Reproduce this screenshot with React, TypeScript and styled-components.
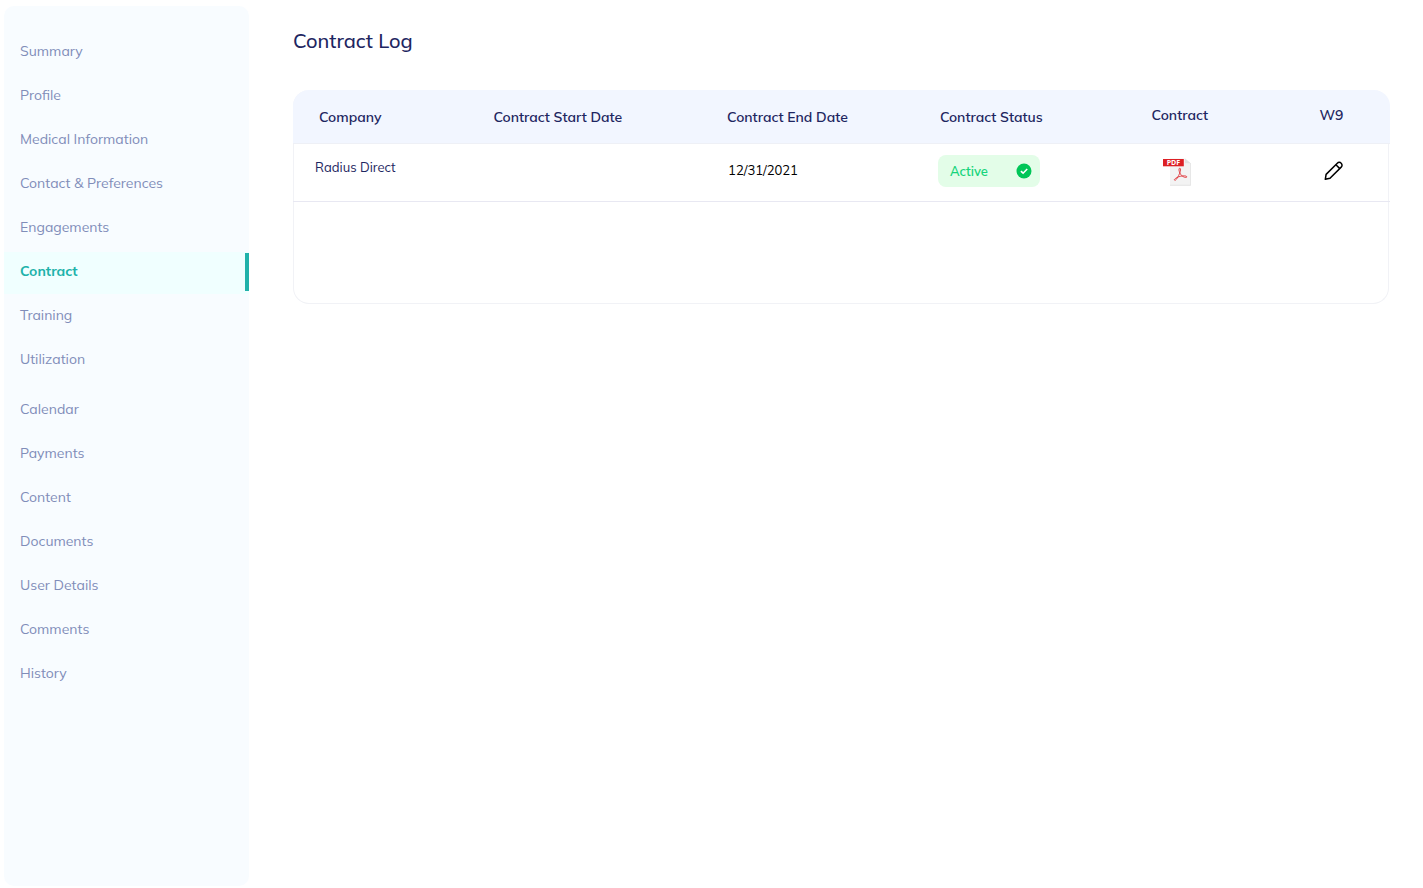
import React from "react";
import styled, { createGlobalStyle } from "styled-components";

const GlobalStyle = createGlobalStyle`
  *, *::before, *::after { box-sizing: border-box; }
  body {
    margin: 0;
    background: #fff;
    color: #1e2661;
    font-family: Mulish, Lato, "Liberation Sans", sans-serif;
  }
`;

const Page = styled.div`
  display: flex;
  gap: 44px;
  min-height: 100vh;
  padding: 6px 34px 2px 4px;
`;

const Sidebar = styled.nav`
  flex: none;
  width: 245px;
  padding: 26px 0;
  border-radius: 10px;
  background: #f8fcff;
`;

const NavGroup = styled.ul`
  display: flex;
  flex-direction: column;
  gap: 2px;
  margin: 0;
  padding: 0;
  list-style: none;

  & + & {
    margin-top: 8px;
  }
`;

const NavLink = styled.a<{ $active: boolean }>`
  display: flex;
  align-items: flex-start;
  justify-content: space-between;
  height: 42px;
  padding-left: 16px;
  background: ${(p) => (p.$active ? "#f0ffff" : "transparent")};
  color: ${(p) => (p.$active ? "#20b2aa" : "#808db9")};
  font-size: 14px;
  font-weight: ${(p) => (p.$active ? 700 : 400)};
  line-height: 38px;
  text-decoration: none;

  &::after {
    content: "";
    width: 4px;
    height: 38px;
    margin-top: 1px;
    background: ${(p) => (p.$active ? "#20b2aa" : "transparent")};
  }
`;

const Main = styled.main`
  flex: 1;
  min-width: 0;
  padding-top: 20px;
`;

const Title = styled.h1`
  margin: 0 0 34px;
  font-size: 20px;
  font-weight: 500;
  line-height: 30px;
`;

const TableCard = styled.section`
  min-height: 214px;
  border: 1px solid #f1f2f6;
  border-top: 0;
  border-radius: 16px;
`;

const Table = styled.table`
  width: calc(100% + 3px);
  margin-left: -1px;
  table-layout: fixed;
  border-collapse: separate;
  border-spacing: 0;
`;

const HeadCell = styled.th<{ $width: string; $raised?: boolean }>`
  width: ${(p) => p.$width};
  height: 54px;
  padding: 0 0 ${(p) => (p.$raised ? 4 : 0)}px 26px;
  border-bottom: 1px solid #eef0f6;
  background: #f2f6ff;
  font-size: 14px;
  font-weight: 600;
  line-height: 20px;
  text-align: left;
  white-space: nowrap;

  &:first-child {
    border-top-left-radius: 16px;
  }

  &:last-child {
    border-top-right-radius: 16px;
  }
`;

const Cell = styled.td<{ $inset?: number; $lift?: number; $dark?: boolean }>`
  height: 58px;
  padding: 0 0 ${(p) => p.$lift ?? 4}px ${(p) => p.$inset ?? 27}px;
  border-bottom: 1px solid #e8e8f2;
  color: ${(p) => (p.$dark ? "#000" : "#1e2661")};
  font-size: 13px;
  line-height: 20px;
  white-space: nowrap;
`;

const Status = styled.span`
  display: flex;
  align-items: center;
  justify-content: space-between;
  width: 102px;
  height: 32px;
  padding: 0 8px 0 12px;
  border-radius: 8px;
  background: #e3fde8;
  color: #16d47b;
  font-size: 13px;
  font-weight: 600;
`;

const FileLink = styled.a`
  display: block;
  width: 28px;
  height: 28px;
`;

const IconButton = styled.button`
  display: block;
  width: 20px;
  height: 20px;
  padding: 0;
  border: 0;
  background: none;
  color: #000;
  cursor: pointer;
`;

const CheckBadge = () => (
  <svg width="16" height="16" viewBox="0 0 16 16" aria-hidden="true">
    <circle cx="8" cy="8" r="7.5" fill="#00c657" />
    <path d="M4.9 8.1 7.1 10.2 11.2 6" fill="none" stroke="#fff" strokeWidth="1.6" />
  </svg>
);

const PdfIcon = () => (
  <svg width="28" height="28" viewBox="0 0 28 28" aria-hidden="true">
    <path d="M7 .5h15l5.7 4.8v22H7z" fill="#f3f3f3" />
    <path d="M7 27.3h20.7V5" fill="none" stroke="#dedede" strokeWidth="0.8" />
    <path d="M22 .5v4.8h5.7z" fill="#e2e2e2" />
    <path d="M0 1h20.8v7.3H0z" fill="#dd2025" />
    <text
      x="10.4"
      y="7.2"
      textAnchor="middle"
      fill="#fff"
      fontFamily="Open Sans, Liberation Sans, sans-serif"
      fontSize="7"
      fontWeight="700"
    >
      PDF
    </text>
    <path
      d="M16.600 10.200c-1.200.3-.5 3.100.2 4.600 1 2.200 2.300 3.300 3.900 4.100 1.500.8 3.200.8 3.100-.1-.1-1.200-3.600-1.100-6-.6-2.500.5-5.600 1.900-6.300 3.200-.5.900.7 1.400 1.800 0 1.500-1.900 3.400-5.700 4-8.100.4-1.700.3-3.200-.7-3.100z"
      fill="none"
      stroke="#dd2025"
      strokeWidth="0.8"
    />
  </svg>
);

const PencilIcon = () => (
  <svg
    width="20"
    height="20"
    viewBox="0 0 20 20"
    fill="none"
    stroke="currentColor"
    strokeWidth="1.5"
    strokeLinejoin="round"
    aria-hidden="true"
  >
    <path d="M1.3 18.3 2.1 13.4 13.3 2.2a2.7 2.7 0 0 1 3.9 0 2.7 2.7 0 0 1 0 3.9L6 17.3z" />
    <path d="m11.9 3.7 3.9 3.9" />
  </svg>
);

const navGroups = [
  [
    "Summary",
    "Profile",
    "Medical Information",
    "Contact & Preferences",
    "Engagements",
    "Contract",
    "Training",
    "Utilization",
  ],
  ["Calendar", "Payments", "Content", "Documents", "User Details", "Comments", "History"],
];

const columns = [
  { label: "Company", width: "15.9%" },
  { label: "Contract Start Date", width: "21.3%" },
  { label: "Contract End Date", width: "19.4%" },
  { label: "Contract Status", width: "19.3%" },
  { label: "Contract", width: "15.3%", raised: true },
  { label: "W9", width: "8.8%", raised: true },
];

export default function App() {
  return (
    <>
      <GlobalStyle />
      <Page>
        <Sidebar aria-label="Sections">
          {navGroups.map((group) => (
            <NavGroup key={group[0]}>
              {group.map((item) => (
                <li key={item}>
                  <NavLink
                    href="#"
                    $active={item === "Contract"}
                    aria-current={item === "Contract" ? "page" : undefined}
                  >
                    {item}
                  </NavLink>
                </li>
              ))}
            </NavGroup>
          ))}
        </Sidebar>
        <Main>
          <Title>Contract Log</Title>
          <TableCard>
            <Table>
              <thead>
                <tr>
                  {columns.map((c) => (
                    <HeadCell key={c.label} scope="col" $width={c.width} $raised={c.raised}>
                      {c.label}
                    </HeadCell>
                  ))}
                </tr>
              </thead>
              <tbody>
                <tr>
                  <Cell $inset={22} $lift={12}>Radius Direct</Cell>
                  <Cell />
                  <Cell $lift={6} $dark>12/31/2021</Cell>
                  <Cell $inset={24}>
                    <Status>
                      Active
                      <CheckBadge />
                    </Status>
                  </Cell>
                  <Cell $inset={37} $lift={2}>
                    <FileLink href="#" aria-label="Open contract PDF">
                      <PdfIcon />
                    </FileLink>
                  </Cell>
                  <Cell $inset={31}>
                    <IconButton type="button" aria-label="Edit W9">
                      <PencilIcon />
                    </IconButton>
                  </Cell>
                </tr>
              </tbody>
            </Table>
          </TableCard>
        </Main>
      </Page>
    </>
  );
}
